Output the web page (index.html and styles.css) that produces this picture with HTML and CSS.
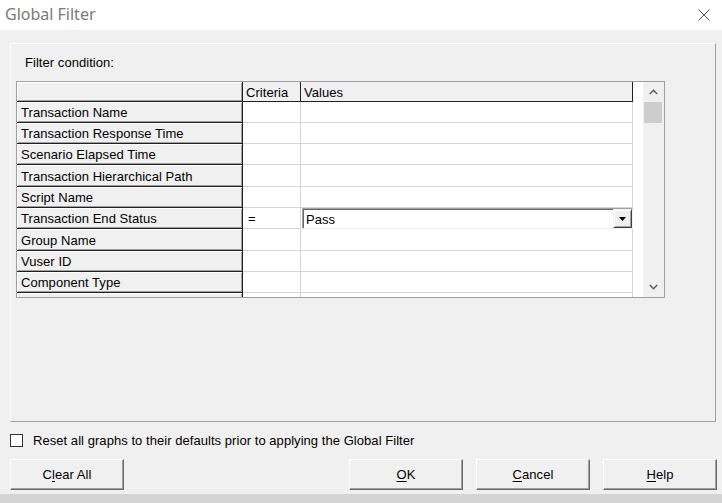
FILE: index.html
```html
<!DOCTYPE html>
<html>
<head>
<meta charset="utf-8">
<link rel="stylesheet" href="styles.css">
</head>
<body>
<div class="titlebar">
  <span class="title">Global Filter</span>
  <svg class="close" width="12" height="12" viewBox="0 0 12 12"><path d="M0.5 0.5L11.5 11.5M11.5 0.5L0.5 11.5" stroke="#555" stroke-width="1" fill="none"/></svg>
</div>
<div class="main">
  <div class="panel">
    <div class="label">Filter condition:</div>
    <div class="gridbox">
      <div class="grid">
        <div class="row hdr">
          <div class="cell rh"></div>
          <div class="cell c1 h">Criteria</div>
          <div class="cell c2 h">Values</div>
          <div class="cell fill"></div>
        </div>
        <div class="row"><div class="cell rh">Transaction Name</div><div class="cell c1 d"></div><div class="cell c2 d"></div><div class="cell fill"></div></div>
        <div class="row"><div class="cell rh">Transaction Response Time</div><div class="cell c1 d"></div><div class="cell c2 d"></div><div class="cell fill"></div></div>
        <div class="row"><div class="cell rh">Scenario Elapsed Time</div><div class="cell c1 d"></div><div class="cell c2 d"></div><div class="cell fill"></div></div>
        <div class="row tall"><div class="cell rh">Transaction Hierarchical Path</div><div class="cell c1 d"></div><div class="cell c2 d"></div><div class="cell fill"></div></div>
        <div class="row"><div class="cell rh">Script Name</div><div class="cell c1 d"></div><div class="cell c2 d"></div><div class="cell fill"></div></div>
        <div class="row"><div class="cell rh">Transaction End Status</div><div class="cell c1 d">=</div>
          <div class="cell c2 d combocell">
            <div class="combo"><span class="combotext">Pass</span><span class="dropbtn"><svg width="7" height="4" viewBox="0 0 7 4"><path d="M0 0H7L3.5 4Z" fill="#000"/></svg></span></div>
          </div><div class="cell fill"></div></div>
        <div class="row tall"><div class="cell rh">Group Name</div><div class="cell c1 d"></div><div class="cell c2 d"></div><div class="cell fill"></div></div>
        <div class="row"><div class="cell rh">Vuser ID</div><div class="cell c1 d"></div><div class="cell c2 d"></div><div class="cell fill"></div></div>
        <div class="row"><div class="cell rh">Component Type</div><div class="cell c1 d"></div><div class="cell c2 d"></div><div class="cell fill"></div></div>
        <div class="row"><div class="cell rh"></div><div class="cell c1 d"></div><div class="cell c2 d"></div><div class="cell fill"></div></div>
      </div>
      <div class="scroll">
        <div class="arrow"><svg width="9" height="6" viewBox="0 0 9 6"><path d="M0.8 5L4.5 1.3L8.2 5" stroke="#606060" stroke-width="1.6" fill="none"/></svg></div>
        <div class="thumb"></div>
        <div class="track"></div>
        <div class="arrow"><svg width="9" height="6" viewBox="0 0 9 6"><path d="M0.8 1L4.5 4.7L8.2 1" stroke="#606060" stroke-width="1.6" fill="none"/></svg></div>
      </div>
    </div>
  </div>
  <div class="checkrow">
    <span class="box"></span>
    <span>Reset all graphs to their defaults prior to applying the Global Filter</span>
  </div>
  <div class="btnrow">
    <div class="btn">C<u>l</u>ear All</div>
    <div class="right">
      <div class="btn"><u>O</u>K</div>
      <div class="btn"><u>C</u>ancel</div>
      <div class="btn"><u>H</u>elp</div>
    </div>
  </div>
</div>
<div class="strip"></div>
</body>
</html>
```
FILE: styles.css
```css
body {
  margin: 0;
  width: 722px;
  height: 503px;
  overflow: hidden;
  background: #f0f0f0;
  font-family: "Liberation Sans", Arial, sans-serif;
  font-size: 13px;
  letter-spacing: 0.05px;
  color: #000;
}

.titlebar {
  height: 30px;
  background: #fff;
  display: flex;
  align-items: center;
  justify-content: space-between;
  padding: 0 12px 0 5px;
}

.title {
  font-family: "Noto Sans", sans-serif;
  font-size: 16px;
  letter-spacing: 0;
  color: #7a7a7a;
  margin-top: -2px;
}

.close {
  display: block;
  margin-top: -1px;
}

.main {
  padding: 13px 6px 0 10px;
}

.panel {
  height: 379px;
  box-sizing: border-box;
  border: 1px solid;
  border-color: #fff #a0a0a0 #a0a0a0 #fff;
  padding-left: 5px;
}

.label {
  padding: 12px 0 0 9px;
  line-height: 14px;
  height: 14px;
  margin-bottom: 11px;
}

.gridbox {
  width: 649px;
  height: 217px;
  box-sizing: border-box;
  border: 1px solid #a0a0a0;
  display: flex;
  overflow: hidden;
  background: #fff;
}

.grid {
  width: 626px;
  overflow: hidden;
}

.row {
  display: flex;
  height: 21px;
}

.row.hdr {
  height: 20px;
}

.row.tall {
  height: 22px;
}

.cell {
  box-sizing: border-box;
  display: flex;
  align-items: center;
  padding-left: 4px;
  padding-top: 1px;
  white-space: nowrap;
  overflow: hidden;
  flex: none;
}

.rh {
  width: 226px;
  background: #f0f0f0;
  border-right: 1px solid #202020;
  border-bottom: 1px solid #202020;
  box-shadow: inset 1px 1px 0 #fff, inset -1px -1px 0 #a0a0a0;
  padding-left: 4px;
}

.c1 {
  width: 58px;
  padding-left: 5px;
}

.c2 {
  width: 332px;
}

.fill {
  width: 10px;
  background: #fff;
}

.d {
  background: #fff;
  border-right: 1px solid #d4d4d4;
  border-bottom: 1px solid #d4d4d4;
}

.h {
  background: #f0f0f0;
  border-right: 1px solid #202020;
  border-bottom: 1px solid #202020;
  padding-left: 3px;
}

.combocell {
  padding: 0 0 0 1px;
  align-items: flex-start;
  border-right: none;
  border-bottom: none;
}

.combo {
  width: 331px;
  height: 21px;
  box-sizing: border-box;
  border: 1px solid;
  border-color: #a0a0a0 #f0f0f0 #f0f0f0 #a0a0a0;
  box-shadow: inset 1px 1px 0 #696969;
  display: flex;
  align-items: center;
  background: #fff;
}

.combotext {
  flex: 1;
  padding-left: 3px;
  padding-top: 2px;
}

.dropbtn {
  width: 19px;
  height: 19px;
  box-sizing: border-box;
  border: 1px solid;
  border-color: #f0f0f0 #404040 #404040 #f0f0f0;
  box-shadow: inset 1px 1px 0 #fff, inset -1px -1px 0 #a0a0a0;
  background: #f0f0f0;
  display: flex;
  align-items: center;
  justify-content: center;
}

.scroll {
  width: 21px;
  background: #f0f0f0;
  display: flex;
  flex-direction: column;
}

.arrow {
  height: 20px;
  display: flex;
  align-items: center;
  justify-content: center;
}

.thumb {
  height: 21px;
  margin: 0 2px 0 1px;
  background: #cdcdcd;
}

.track {
  flex: 1;
}

.checkrow {
  display: flex;
  align-items: center;
  margin-top: 11px;
  height: 14px;
}

.box {
  width: 13px;
  height: 13px;
  box-sizing: border-box;
  border: 1px solid #333;
  background: #fff;
  margin-right: 10px;
}

.btnrow {
  display: flex;
  justify-content: space-between;
  margin-top: 12px;
  margin-right: -1px;
}

.right {
  display: flex;
  gap: 13px;
}

.btn {
  width: 114px;
  height: 31px;
  box-sizing: border-box;
  border: 1px solid;
  border-color: #fff #696969 #696969 #fff;
  box-shadow: inset -1px -1px 0 #a0a0a0;
  background: #f0f0f0;
  display: flex;
  align-items: center;
  justify-content: center;
}

.btn u {
  text-decoration-thickness: 1px;
  text-underline-offset: 2px;
}

.strip {
  margin-top: 4px;
  height: 9px;
  background: #d4d4d4;
}
```
